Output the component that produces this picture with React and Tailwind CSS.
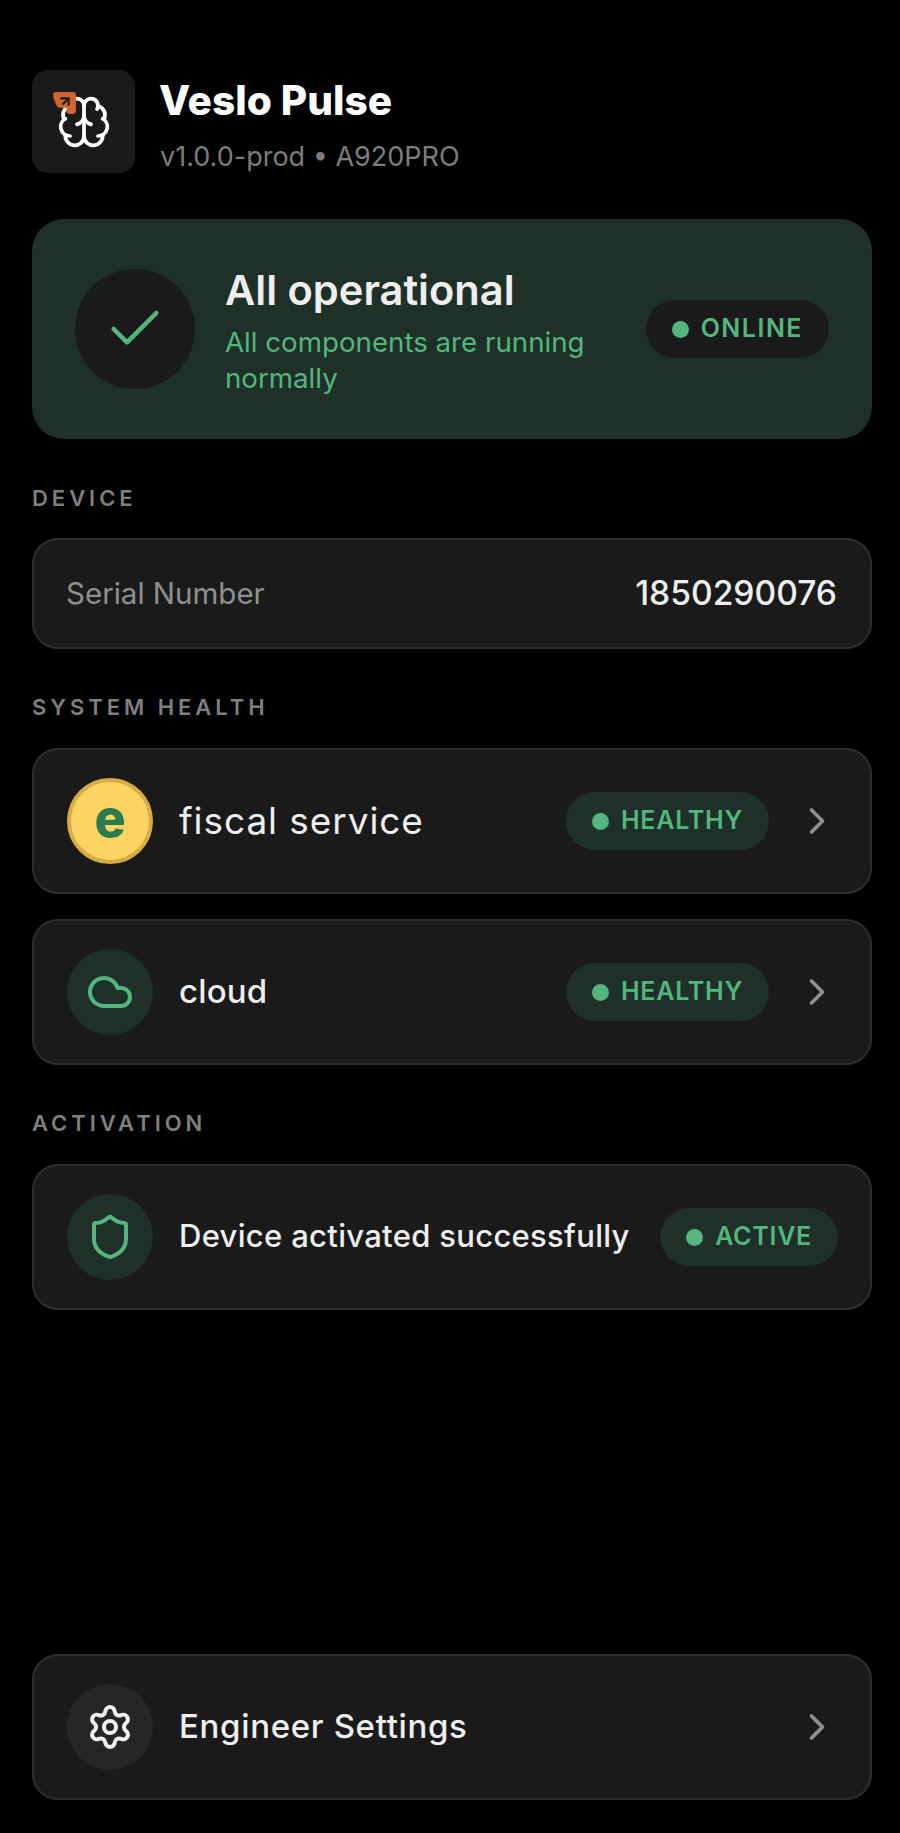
import React from "react";
import { Brain, Check, ChevronRight, Cloud, Settings, Shield } from "lucide-react";

function SectionLabel({ children, className = "" }) {
  return (
    <h2 className={`text-[22px] leading-[28px] font-semibold tracking-[0.18em] uppercase text-[#7f7f7f] ${className}`}>
      {children}
    </h2>
  );
}

function StatusPill({ label, dark = false, textClass = "tracking-[0.03em]" }) {
  return (
    <span
      className={`flex items-center gap-[12px] h-[58px] px-[26px] rounded-full shrink-0 ${dark ? "bg-[#1a1a1a]" : "bg-[#1e3028]"}`}
    >
      <span className="w-[17px] h-[17px] rounded-full bg-[#55b57f]" />
      <span className={`text-[25px] font-semibold text-[#55b57f] ${textClass}`}>{label}</span>
    </span>
  );
}

function Row({ icon, label, labelClass = "text-[33px] font-medium tracking-[0.005em]", pill, chevron = true }) {
  return (
    <div className={`flex items-center h-[146px] pl-[33px] rounded-[26px] border-2 border-[#2e2e2e] bg-[#1a1a1a] ${chevron ? "pr-[31px]" : "pr-[32px]"}`}>
      {icon}
      <span className={`ml-[26px] flex-1 text-[#eeeeee] whitespace-nowrap ${labelClass}`}>{label}</span>
      {pill}
      {chevron && <ChevronRight size={44} strokeWidth={2} className="ml-[26px] text-[#8f8f8f]" />}
    </div>
  );
}

function IconCircle({ children, className = "bg-[#1e3028]" }) {
  return (
    <span className={`flex items-center justify-center w-[86px] h-[86px] rounded-full shrink-0 ${className}`}>
      {children}
    </span>
  );
}

export default function App() {
  return (
    <div className="flex flex-col min-h-[1833px] bg-black pl-[32px] pr-[28px] pt-[70px] pb-[33px] font-['Inter',sans-serif]">
      <header className="flex items-center">
        <div className="relative flex items-center justify-center w-[103px] h-[103px] rounded-[16px] bg-[#1a1a1a]">
          <Brain size={56} strokeWidth={1.6} className="text-white" />
          <svg viewBox="0 0 24 24" className="absolute left-[19px] top-[20px] w-[27px] h-[25px]">
            <path
              d="M1 5a3 3 0 0 1 3-3h16a3 3 0 0 1 3 3v15a3 3 0 0 1-3 3h-3a3 3 0 0 1-3-3v-3H8a4 4 0 0 1-4-3L1.500 8z"
              fill="#d2642f"
            />
            <path d="M8 8h8v7M15.500 8.500 10 14" fill="none" stroke="#1a1a1a" strokeWidth="2" />
          </svg>
        </div>
        <div className="ml-[25px] pt-[7px]">
          <h1 className="-ml-[1px] text-[40.6px] leading-[46px] font-extrabold text-white">Veslo Pulse</h1>
          <p className="mt-[17px] text-[27px] leading-[32px] text-[#7d7d7d]">v1.0.0-prod • A920PRO</p>
        </div>
      </header>

      <section className="flex items-center h-[220px] mt-[46px] px-[43px] rounded-[32px] bg-[#1e3028]">
        <span className="flex items-center justify-center w-[120px] h-[120px] rounded-full bg-[#1a1a1a] shrink-0">
          <Check size={64} strokeWidth={1.7} className="text-[#55b57f]" />
        </span>
        <div className="ml-[30px] pt-[3px] flex-1">
          <h2 className="text-[41.6px] leading-[48px] font-semibold text-[#eeeeee]">All operational</h2>
          <p className="mt-[10px] max-w-[390px] text-[27.7px] leading-[36px] text-[#55b57f]">
            All components are running normally
          </p>
        </div>
        <StatusPill label="ONLINE" dark textClass="tracking-[0.06em]" />
      </section>

      <SectionLabel className="mt-[45px]">Device</SectionLabel>
      <div className="flex items-center justify-between h-[111px] mt-[26px] px-[33px] rounded-[26px] border-2 border-[#2e2e2e] bg-[#1a1a1a]">
        <span className="-ml-[1px] text-[29.5px] text-[#8f8f8f]">Serial Number</span>
        <span className="text-[33.6px] font-medium text-[#eeeeee]">1850290076</span>
      </div>

      <SectionLabel className="mt-[44px]">System Health</SectionLabel>
      <div className="flex flex-col gap-[25px] mt-[27px]">
        <Row
          icon={
            <span className="flex items-center justify-center w-[86px] h-[86px] rounded-full shrink-0 bg-[#fad561] border-[4px] border-[#d9ab45]">
              <span className="text-[52px] leading-none font-extrabold text-[#2f7a4d] -translate-y-[2px]">e</span>
            </span>
          }
          label="fiscal service"
          labelClass="text-[37px] font-normal tracking-[0.025em]"
          pill={<StatusPill label="HEALTHY" />}
        />
        <Row
          icon={
            <IconCircle>
              <Cloud size={48} strokeWidth={2} className="text-[#55b57f]" />
            </IconCircle>
          }
          label="cloud"
          pill={<StatusPill label="HEALTHY" />}
        />
      </div>

      <SectionLabel className="mt-[44px]">Activation</SectionLabel>
      <div className="mt-[27px]">
        <Row
          icon={
            <IconCircle>
              <Shield size={48} strokeWidth={2} className="text-[#55b57f]" />
            </IconCircle>
          }
          label="Device activated successfully"
          labelClass="text-[31px] font-medium tracking-[0.01em] -translate-y-[1px]"
          pill={<StatusPill label="ACTIVE" />}
          chevron={false}
        />
      </div>

      <div className="mt-auto">
        <Row
          icon={
            <IconCircle className="bg-[#262626]">
              <Settings size={48} strokeWidth={2} className="text-[#eeeeee]" />
            </IconCircle>
          }
          label="Engineer Settings"
          labelClass="text-[33px] font-medium tracking-[0.02em]"
        />
      </div>
    </div>
  );
}
